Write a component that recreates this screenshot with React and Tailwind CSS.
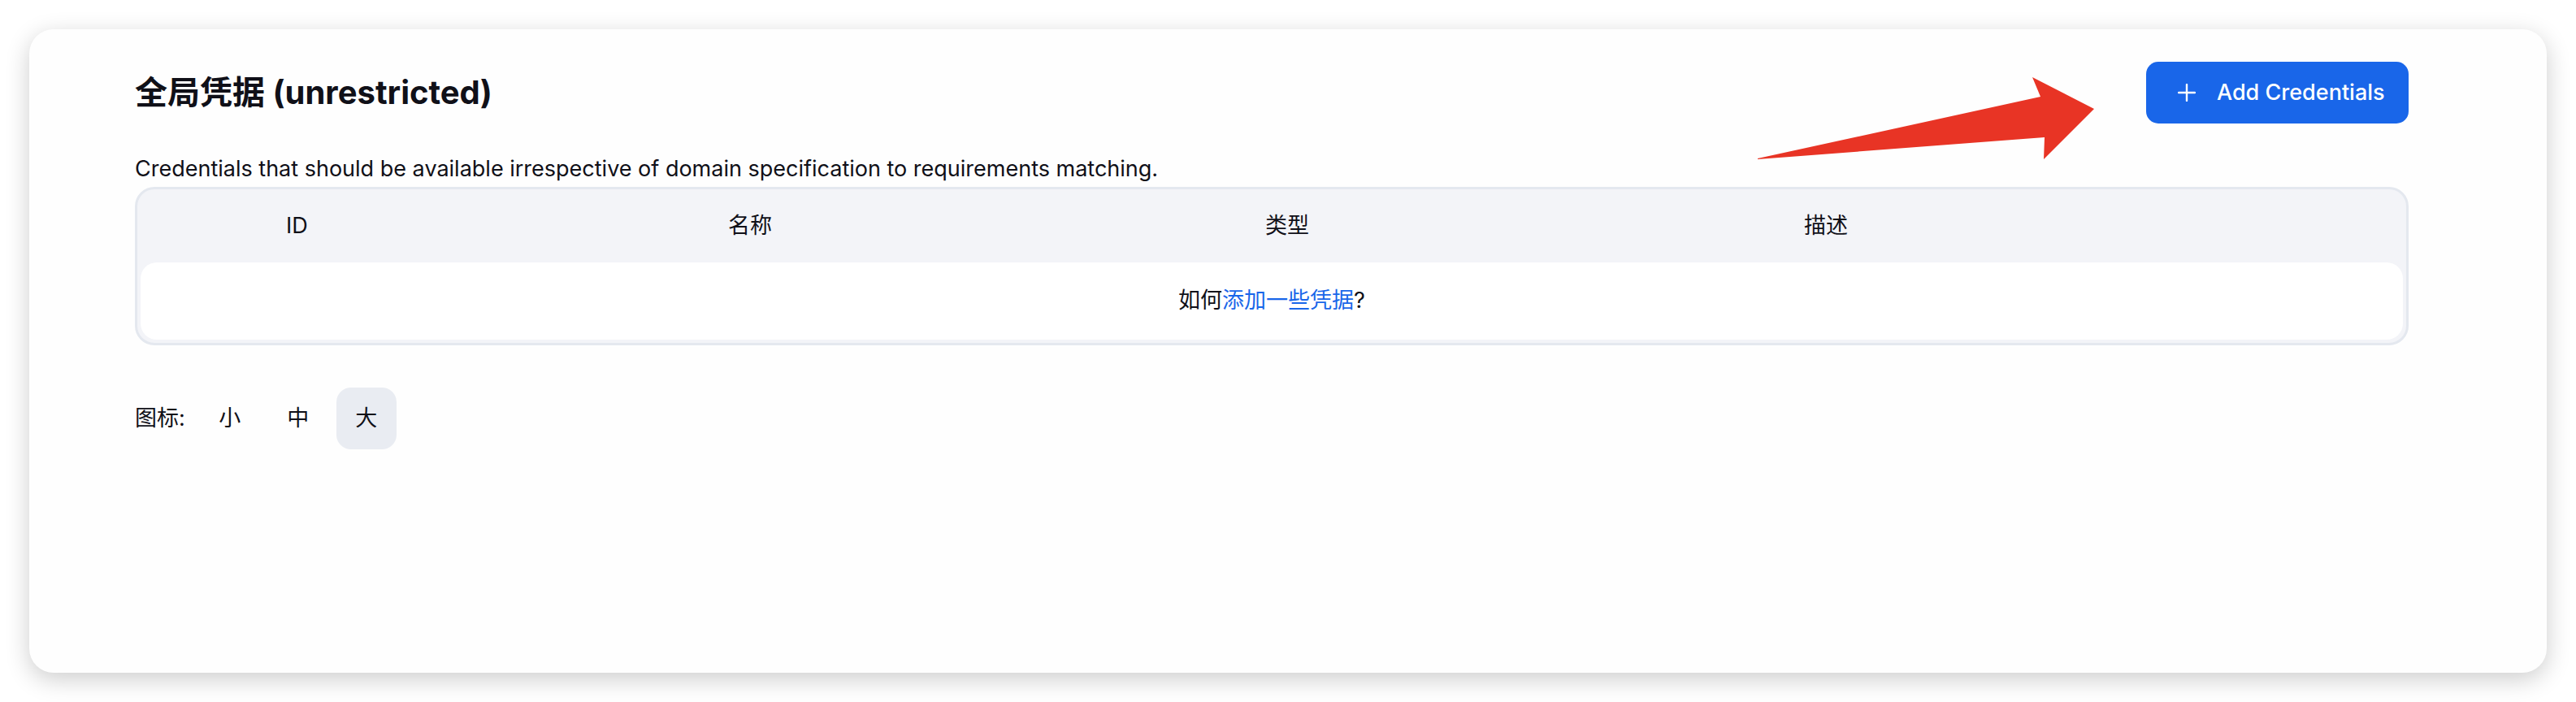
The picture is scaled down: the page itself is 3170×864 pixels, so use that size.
import React from "react";

const columns = [
  { label: "ID", w: "w-[544px]" },
  { label: "名称", w: "w-[661px]" },
  { label: "类型", w: "w-[663px]" },
  { label: "描述", w: "flex-1" },
];

const PlusIcon = () => (
  <svg width="22" height="22" viewBox="0 0 22 22" fill="none">
    <path d="M11 1v20M1 11h20" stroke="white" strokeWidth="2.4" strokeLinecap="round" />
  </svg>
);

const App = () => {
  const [size, setSize] = React.useState("大");

  return (
    <div className="w-[3170px] h-[864px] bg-white p-[36px] font-['Inter','Noto_Sans_CJK_SC',sans-serif] text-[#101018]">
      <div className="relative h-full rounded-[30px] bg-[#fefefe] shadow-[0_8px_30px_rgba(0,0,0,0.2)] pl-[130px] pr-[170px] pt-[40px]">
        <div className="flex h-[76px] items-center justify-between">
          <h1 className="text-[40px] font-bold leading-none">全局凭据 (unrestricted)</h1>
          <button className="flex h-[76px] w-[323px] items-center rounded-[15px] bg-[#1966e9] pl-[39px] text-[27px] font-medium text-white">
            <PlusIcon />
            <span className="ml-[26px]">Add Credentials</span>
          </button>
        </div>

        <p className="mt-[38px] text-[27px] leading-[36px]">
          Credentials that should be available irrespective of domain specification to requirements matching.
        </p>

        <div className="mt-[4px] rounded-[24px] border-[3px] border-[#e4e8ef] bg-[#f3f4f8] px-[4px] pb-[4px]">
          <div className="flex h-[90px] items-center pl-[179px] text-[27px]">
            {columns.map((c) => (
              <div key={c.label} className={c.w}>
                {c.label}
              </div>
            ))}
          </div>
          <div className="flex h-[95px] items-center justify-center rounded-[20px] bg-white text-[27px]">
            <span>
              如何<a className="text-[#1966e9]">添加一些凭据</a>?
            </span>
          </div>
        </div>

        <div className="mt-[52px] flex h-[76px] items-center text-[27px]">
          <span className="mr-[18px]">图标:</span>
          {["小", "中", "大"].map((s) => (
            <button
              key={s}
              onClick={() => setSize(s)}
              className={
                "mr-[10px] flex h-[76px] w-[74px] items-center justify-center rounded-[18px] " +
                (size === s ? "bg-[#e9ecf2]" : "")
              }
            >
              {s}
            </button>
          ))}
        </div>

        <svg
          className="pointer-events-none absolute left-[2120px] top-[55px]"
          width="430"
          height="110"
          viewBox="0 0 430 110"
        >
          <polygon points="7,104 355,28 345,4 421,43 359,105 360,78 7,105" fill="#e83425" />
        </svg>
      </div>
    </div>
  );
};

export default App;
